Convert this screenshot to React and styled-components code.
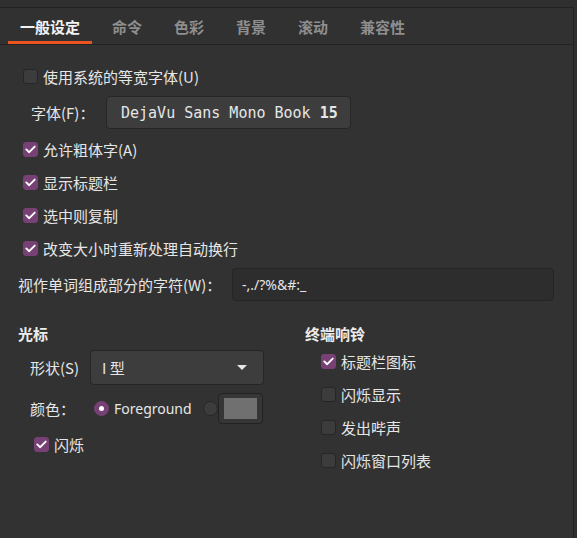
import React from "react";
import styled, { createGlobalStyle } from "styled-components";

const GlobalStyle = createGlobalStyle`
  html, body {
    margin: 0;
    padding: 0;
    background: #2f2f2f;
    height: 100%;
  }
  body {
    font-family: "Noto Sans", "Noto Sans CJK SC", sans-serif;
    color: #e4e4e4;
    overflow: hidden;
  }
`;

const Page = styled.div`
  width: 577px;
  height: 538px;
  padding-top: 7px;
  box-sizing: border-box;
`;

const Notebook = styled.div`
  width: 574px;
  height: 531px;
  box-sizing: border-box;
  border-top: 1px solid #222;
  border-right: 1px solid #222;
  background: #323232;
  display: flex;
  flex-direction: column;
`;

const TabBar = styled.div`
  display: flex;
  gap: 8px;
  height: 36px;
  padding-left: 8px;
  border-bottom: 1px solid #222;
  background: #313131;
`;

const Tab = styled.div`
  padding: 0 12px;
  display: flex;
  align-items: center;
  font-family: "Noto Sans CJK SC", sans-serif;
  font-size: 15px;
  font-weight: 700;
  color: ${(p) => (p.$active ? "#f2f2f2" : "#8e8e8e")};
  box-shadow: ${(p) => (p.$active ? "inset 0 -3px 0 #e95420" : "none")};
`;

const Content = styled.div`
  padding: 15px 18px 0 18px;
  display: flex;
  flex-direction: column;
`;

const Row = styled.div`
  display: flex;
  align-items: center;
  height: ${(p) => p.$h || 33}px;
  margin-top: ${(p) => p.$mt || 0}px;
  padding-left: ${(p) => p.$indent || 0}px;
`;

const Label = styled.span`
  font-family: "Noto Sans CJK SC", sans-serif;
  font-size: 15px;
  color: #e6e6e6;
  white-space: nowrap;
  width: ${(p) => (p.$w ? `${p.$w}px` : "auto")};
  flex-shrink: 0;
`;

const Box = styled.span`
  width: 15px;
  height: 15px;
  box-sizing: border-box;
  border-radius: 3px;
  margin-right: 5px;
  flex-shrink: 0;
  display: flex;
  align-items: center;
  justify-content: center;
  background: ${(p) => (p.$checked ? "#784175" : "#3c3c3c")};
  border: 1px solid ${(p) => (p.$checked ? "#784175" : "#262626")};
`;

const FontButton = styled.div`
  width: 245px;
  height: 33px;
  box-sizing: border-box;
  padding-left: 14px;
  display: flex;
  align-items: center;
  background: #3d3d3d;
  border: 1px solid #262626;
  border-radius: 4px;
  font-family: "DejaVu Sans Mono", monospace;
  font-size: 15px;
  color: #e6e6e6;
  white-space: pre;
  b {
    font-weight: 700;
  }
`;

const Entry = styled.div`
  width: 322px;
  height: 33px;
  box-sizing: border-box;
  margin-left: auto;
  margin-right: 1px;
  padding-left: 9px;
  display: flex;
  align-items: center;
  background: #2d2d2d;
  border: 1px solid #252525;
  border-radius: 4px;
  font-size: 14px;
  color: #e6e6e6;
`;

const Columns = styled.div`
  display: grid;
  grid-template-columns: 287px 1fr;
  margin-top: 22px;
`;

const Column = styled.div`
  display: flex;
  flex-direction: column;
`;

const Heading = styled.div`
  height: 20px;
  display: flex;
  align-items: center;
  font-family: "Noto Sans CJK SC", sans-serif;
  font-weight: 700;
  font-size: 15px;
  color: #ececec;
`;

const Dropdown = styled.div`
  width: 174px;
  height: 35px;
  box-sizing: border-box;
  padding: 0 12px 0 11px;
  display: flex;
  align-items: center;
  justify-content: space-between;
  background: #3d3d3d;
  border: 1px solid #262626;
  border-radius: 4px;
  font-family: "Noto Sans CJK SC", sans-serif;
  font-size: 15px;
  color: #e6e6e6;
`;

const Caret = styled.span`
  width: 0;
  height: 0;
  border-left: 5px solid transparent;
  border-right: 5px solid transparent;
  border-top: 5px solid #e6e6e6;
  margin-right: 4px;
`;

const Radio = styled.span`
  width: 15px;
  height: 15px;
  box-sizing: border-box;
  border-radius: 50%;
  flex-shrink: 0;
  display: flex;
  align-items: center;
  justify-content: center;
  background: ${(p) => (p.$checked ? "#784175" : "#3c3c3c")};
  border: 1px solid ${(p) => (p.$checked ? "#784175" : "#262626")};
  margin-right: ${(p) => p.$mr || 0}px;
  &::after {
    content: "";
    display: ${(p) => (p.$checked ? "block" : "none")};
    width: 5px;
    height: 5px;
    border-radius: 50%;
    background: #fff;
  }
`;

const RadioText = styled.span`
  font-size: 14px;
  color: #e6e6e6;
  margin-right: 11px;
`;

const ColorButton = styled.div`
  width: 45px;
  height: 31px;
  box-sizing: border-box;
  padding: 4px 5px;
  background: #363636;
  border: 1px solid #222;
  border-radius: 4px;
  display: flex;
`;

const Swatch = styled.div`
  flex: 1;
  background: #707070;
`;

const Check = () => (
  <svg width="11" height="9" viewBox="0 0 11 9">
    <path d="M1.3 4.4 L4.2 7.2 L9.7 1.6" fill="none" stroke="#fff" strokeWidth="1.9" strokeLinecap="round" strokeLinejoin="round" />
  </svg>
);

const CheckRow = ({ checked, children, indent = 5, h, mt }) => (
  <Row $indent={indent} $h={h} $mt={mt}>
    <Box $checked={checked}>{checked && <Check />}</Box>
    <Label>{children}</Label>
  </Row>
);

const tabs = ["一般设定", "命令", "色彩", "背景", "滚动", "兼容性"];

export default function App() {
  return (
    <Page>
      <GlobalStyle />
      <Notebook>
        <TabBar>
          {tabs.map((t, i) => (
            <Tab key={t} $active={i === 0}>{t}</Tab>
          ))}
        </TabBar>
        <Content>
          <CheckRow checked={false}>使用系统的等宽字体(U)</CheckRow>
          <Row $mt={3} $indent={13}>
            <Label $w={75}>字体(F)：</Label>
            <FontButton>DejaVu Sans Mono Book <b>15</b></FontButton>
          </Row>
          <CheckRow checked mt={4}>允许粗体字(A)</CheckRow>
          <CheckRow checked>显示标题栏</CheckRow>
          <CheckRow checked>选中则复制</CheckRow>
          <CheckRow checked>改变大小时重新处理自动换行</CheckRow>
          <Row $mt={3}>
            <Label>视作单词组成部分的字符(W)：</Label>
            <Entry>-,./?%&amp;#:_</Entry>
          </Row>
          <Columns>
            <Column>
              <Heading>光标</Heading>
              <Row $h={35} $mt={7} $indent={12}>
                <Label $w={60}>形状(S)</Label>
                <Dropdown>
                  <span>I 型</span>
                  <Caret />
                </Dropdown>
              </Row>
              <Row $h={31} $mt={8} $indent={12}>
                <Label $w={64}>颜色：</Label>
                <Radio $checked $mr={5} />
                <RadioText>Foreground</RadioText>
                <Radio />
                <ColorButton>
                  <Swatch />
                </ColorButton>
              </Row>
              <CheckRow checked indent={16} h={24} mt={8}>闪烁</CheckRow>
            </Column>
            <Column>
              <Heading>终端响铃</Heading>
              <CheckRow checked indent={16} mt={2}>标题栏图标</CheckRow>
              <CheckRow checked={false} indent={16}>闪烁显示</CheckRow>
              <CheckRow checked={false} indent={16}>发出哔声</CheckRow>
              <CheckRow checked={false} indent={16}>闪烁窗口列表</CheckRow>
            </Column>
          </Columns>
        </Content>
      </Notebook>
    </Page>
  );
}
